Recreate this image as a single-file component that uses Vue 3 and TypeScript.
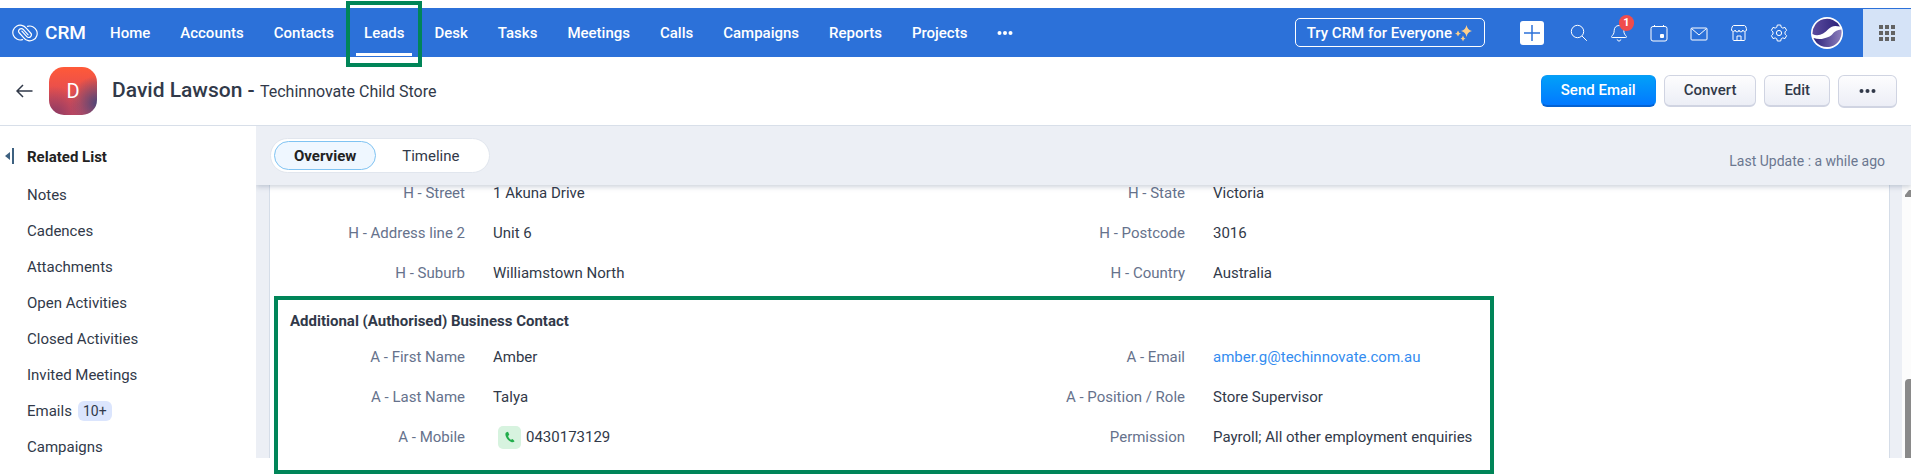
<script setup lang="ts">
import { ref } from 'vue'

interface Field {
  label: string
  value: string
  kind?: 'link' | 'phone'
}

const modules: string[] = [
  'Home', 'Accounts', 'Contacts', 'Leads', 'Desk', 'Tasks',
  'Meetings', 'Calls', 'Campaigns', 'Reports', 'Projects',
]
const activeModule = ref('Leads')

const related: { name: string; count?: string }[] = [
  { name: 'Notes' },
  { name: 'Cadences' },
  { name: 'Attachments' },
  { name: 'Open Activities' },
  { name: 'Closed Activities' },
  { name: 'Invited Meetings' },
  { name: 'Emails', count: '10+' },
  { name: 'Campaigns' },
]

const tabs: string[] = ['Overview', 'Timeline']
const activeTab = ref('Overview')

const address: Field[] = [
  { label: 'H - Street', value: '1 Akuna Drive' },
  { label: 'H - State', value: 'Victoria' },
  { label: 'H - Address line 2', value: 'Unit 6' },
  { label: 'H - Postcode', value: '3016' },
  { label: 'H - Suburb', value: 'Williamstown North' },
  { label: 'H - Country', value: 'Australia' },
]

const contact: Field[] = [
  { label: 'A - First Name', value: 'Amber' },
  { label: 'A - Email', value: 'amber.g@techinnovate.com.au', kind: 'link' },
  { label: 'A - Last Name', value: 'Talya' },
  { label: 'A - Position / Role', value: 'Store Supervisor' },
  { label: 'A - Mobile', value: '0430173129', kind: 'phone' },
  { label: 'Permission', value: 'Payroll; All other employment enquiries' },
]
</script>

<template>
  <div class="page">
    <header class="topbar">
      <a class="brand" href="#">
        <svg width="26" height="18" viewBox="0 0 26 18" fill="none" stroke="#fff" stroke-width="1.2" stroke-linecap="round">
          <path d="M10.5 15.6A7.400 7.400 0 1 1 14.2 4.2L18.6 9a2.6 2.6 0 0 1-3.8 3.6L9.9 7.2" />
          <path d="M15.5 2.4A7.400 7.400 0 1 1 11.8 13.8L7.4 9A2.6 2.6 0 0 1 11.200 5.400L16.100 10.800" />
        </svg>
        <span>CRM</span>
      </a>
      <nav class="modules">
        <a
          v-for="m in modules"
          :key="m"
          href="#"
          class="module"
          :class="{ active: m === activeModule }"
          @click.prevent="activeModule = m"
        >{{ m }}</a>
        <button class="more-modules" aria-label="More modules">
          <svg width="16" height="6" viewBox="0 0 16 6" fill="#fff">
            <circle cx="2.500" cy="3" r="2" /><circle cx="8" cy="3" r="2" /><circle cx="13.500" cy="3" r="2" />
          </svg>
        </button>
      </nav>

      <button class="try">
        Try CRM for Everyone
        <svg width="18" height="18" viewBox="0 0 18 18" fill="#ffcf8a">
          <path d="M11.500 1Q12.300 6 17 7Q12.300 8 11.500 13Q10.700 8 6 7Q10.700 6 11.500 1Z" />
          <path d="M3 6.500Q3.500 9 6 9.500Q3.500 10 3 12.500Q2.500 10 0 9.500Q2.500 9 3 6.500Z" />
          <path d="M8 11.500Q8.400 14 10.500 14.500Q8.400 15 8 17.500Q7.600 15 5.500 14.500Q7.600 14 8 11.500Z" />
        </svg>
      </button>

      <div class="tools">
        <button class="tool add" aria-label="Create">
          <svg width="24" height="24" viewBox="0 0 24 24">
            <rect width="24" height="24" rx="3" fill="#fff" />
            <path d="M12 4v16M4 12h16" stroke="#2c71d9" stroke-width="1.500" fill="none" />
          </svg>
        </button>
        <button class="tool" aria-label="Search">
          <svg width="18" height="18" viewBox="0 0 18 18"><circle cx="7.500" cy="7.500" r="6.200" /><path d="M12 12l4.800 4.800" /></svg>
        </button>
        <button class="tool" aria-label="Notifications">
          <svg width="18" height="18" viewBox="0 0 18 18">
            <path d="M9 1.500C5.800 1.500 4.200 4 4.200 6.500c0 3.500-1.400 4.300-2.500 5.800-.5.700-.2 1.200.5 1.200h13.600c.7 0 1-.5.500-1.200-1.100-1.500-2.500-2.300-2.500-5.800C13.800 4 12.200 1.500 9 1.500zM6.800 15.500L9 17.300l2.200-1.800" />
          </svg>
          <span class="badge">1</span>
        </button>
        <button class="tool" aria-label="Calendar">
          <svg width="18" height="18" viewBox="0 0 18 18">
            <rect x="1" y="2.500" width="16" height="14.500" rx="2" /><path d="M4.500 1v2M13.500 1v2" />
            <rect x="10" y="10" width="4" height="4" rx="1" fill="#fff" stroke="none" />
          </svg>
        </button>
        <button class="tool" aria-label="Mail">
          <svg width="18" height="18" viewBox="0 0 18 18"><rect x="1" y="4" width="16" height="12" rx="1" /><path d="M1.500 4.500L9 11l7.500-6.500" /></svg>
        </button>
        <button class="tool" aria-label="Marketplace">
          <svg width="18" height="18" viewBox="0 0 18 18">
            <path d="M3.500 1.500h11c1 0 2 2.500 2 4.500a1.900 1.900 0 0 1-3.700 0 1.900 1.900 0 0 1-3.800 0 1.900 1.900 0 0 1-3.800 0 1.900 1.900 0 0 1-3.700 0c0-2 1-4.500 2-4.500zM3 8v7.500c0 .6.400 1 1 1h10c.6 0 1-.4 1-1V8M7 16.500V12h4v4.500" />
          </svg>
        </button>
        <button class="tool" aria-label="Setup">
          <svg width="18" height="18" viewBox="0 0 18 18">
            <path d="M7.300 1h3.400l.5 2.200 1.600.9 2.200-.7 1.600 2.900-1.600 1.600v2.200l1.600 1.600-1.600 2.900-2.200-.7-1.600.9-.5 2.200H7.300l-.5-2.200-1.600-.9-2.200.7-1.600-2.900L3 10.100V7.900L1.400 6.300 3 3.400l2.200.7 1.600-.9z" stroke-linejoin="round" />
            <circle cx="9" cy="9" r="2.600" />
          </svg>
        </button>
      </div>
      <button class="profile" aria-label="Profile">
        <svg width="32" height="32" viewBox="0 0 32 32">
          <defs>
            <linearGradient id="orb" x1="0" y1="0" x2="1" y2="0">
              <stop offset="0" stop-color="#2b2279" /><stop offset="1" stop-color="#8d7fbd" />
            </linearGradient>
            <linearGradient id="orbTop" x1="0" y1="0" x2="1" y2="0">
              <stop offset="0" stop-color="#5b4b9e" /><stop offset="1" stop-color="#2b2279" />
            </linearGradient>
          </defs>
          <circle cx="16" cy="16" r="16" fill="#fff" />
          <path d="M1.500 17A14.600 14.600 0 0 1 29 9.500C24 8.500 21 8.500 17.500 12 13 17 7 20 1.500 17Z" fill="url(#orbTop)" />
          <path d="M2.500 21C8 23 13 22 18.500 19.500 22 18 22 13.500 30.300 12.500A14.600 14.600 0 0 1 2.500 21Z" fill="url(#orb)" />
        </svg>
      </button>
      <button class="apps" aria-label="All apps">
        <svg width="16" height="16" viewBox="0 0 16 16" fill="#636363">
          <path d="M0 0h4v4H0zM6 0h4v4H6zM12 0h4v4h-4zM0 6h4v4H0zM6 6h4v4H6zM12 6h4v4h-4zM0 12h4v4H0zM6 12h4v4H6zM12 12h4v4h-4z" />
        </svg>
      </button>
    </header>

    <section class="record">
      <button class="back" aria-label="Back">
        <svg width="17" height="14" viewBox="0 0 17 14" fill="none" stroke="#313949" stroke-width="1.500"><path d="M16.500 7H1M7 1L1 7l6 6" /></svg>
      </button>
      <div class="avatar">D</div>
      <h1>David Lawson <span class="dash">-</span> <small>Techinnovate Child Store</small></h1>
      <div class="actions">
        <button class="btn primary">Send Email</button>
        <button class="btn">Convert</button>
        <button class="btn">Edit</button>
        <button class="btn dots" aria-label="More actions">
          <svg width="17" height="6" viewBox="0 0 17 6" fill="#313949">
            <circle cx="2.500" cy="3" r="2" /><circle cx="8.500" cy="3" r="2" /><circle cx="14.500" cy="3" r="2" />
          </svg>
        </button>
      </div>
    </section>

    <div class="body">
      <aside class="sidebar">
        <button class="collapse" aria-label="Collapse list">
          <svg width="9" height="16" viewBox="0 0 9 16" fill="#3d6180"><path d="M5 4v8L0 8zM7 0h2v16H7z" /></svg>
        </button>
        <h2>Related List</h2>
        <ul>
          <li v-for="r in related" :key="r.name">
            <a href="#">{{ r.name }}</a><span v-if="r.count" class="count">{{ r.count }}</span>
          </li>
        </ul>
      </aside>

      <main class="main">
        <div class="tabbar">
          <div class="tabs" role="tablist">
            <button
              v-for="t in tabs"
              :key="t"
              role="tab"
              :aria-selected="t === activeTab"
              class="tab"
              :class="{ selected: t === activeTab }"
              @click="activeTab = t"
            >{{ t }}</button>
          </div>
          <span class="updated">Last Update : a while ago</span>
        </div>
        <div class="viewport">
          <div class="panel">
            <dl class="fields scrolled">
              <div v-for="f in address" :key="f.label" class="field">
                <dt>{{ f.label }}</dt>
                <dd>{{ f.value }}</dd>
              </div>
            </dl>
            <section class="contact">
              <h3>Additional (Authorised) Business Contact</h3>
              <dl class="fields">
                <div v-for="f in contact" :key="f.label" class="field">
                  <dt>{{ f.label }}</dt>
                  <dd>
                    <a v-if="f.kind === 'link'" :href="`mailto:${f.value}`">{{ f.value }}</a>
                    <span v-else-if="f.kind === 'phone'" class="phone">
                      <button class="call" aria-label="Call">
                        <svg width="10" height="12" viewBox="0 0 10 12"><path d="M1 1.500C.2 2.500.2 4 1 5.800 2.200 8.500 4.500 10.800 6.800 11.200 8 11.400 9 11 9.600 10.200L7.600 8 6 8.800C4.700 8.200 3.500 6.500 3.100 5L4.300 3.700 3 .8Z" fill="#21ad4b" /></svg>
                      </button>{{ f.value }}
                    </span>
                    <template v-else>{{ f.value }}</template>
                  </dd>
                </div>
              </dl>
            </section>
          </div>
          <div class="scroll" aria-hidden="true">
            <svg class="scroll-up" width="6" height="7" viewBox="0 0 6 7"><path d="M0 7V5L4 0H6V7Z" fill="#8a8a8a" /></svg>
            <div class="thumb"></div>
          </div>
        </div>
      </main>
    </div>
  </div>
</template>

<style>
body {
  margin: 0;
  background: #fff;
}
</style>

<style scoped>
.page {
  padding: 8px 0 17px;
  font-family: Roboto, "Liberation Sans", sans-serif;
  font-size: 15px;
  line-height: 20px;
  color: #313949;
  overflow-x: clip;
}
button {
  font: inherit;
  color: inherit;
  margin: 0;
  padding: 0;
  border: 0;
  background: none;
  cursor: pointer;
}
a {
  color: inherit;
  text-decoration: none;
}
svg {
  display: block;
  flex: none;
}

.topbar {
  display: flex;
  align-items: center;
  height: 49px;
  background: #2c71d9;
  color: #fff;
}
.brand {
  display: flex;
  align-items: center;
  gap: 7px;
  width: 90px;
  padding-left: 12px;
  font-size: 19px;
  font-weight: 500;
}
.modules {
  display: flex;
  align-items: center;
  gap: 14px;
  flex: 1;
}
.module {
  position: relative;
  padding: 15px 8px 14px;
  font-weight: 500;
}
.module.active::before {
  content: "";
  position: absolute;
  inset: auto 0 1px;
  height: 3px;
  background: #fff;
}
.module.active::after {
  content: "";
  position: absolute;
  inset: -7px -10px -10px;
  border: 4px solid #008558;
  pointer-events: none;
}
.more-modules {
  padding: 6px 8px;
}
.try {
  display: flex;
  align-items: center;
  gap: 3px;
  height: 29px;
  padding: 0 11px;
  border: 1px solid #fff;
  border-radius: 5px;
  font-weight: 500;
}
.tools {
  display: flex;
  align-items: center;
  gap: 22px;
  margin: 0 23px 0 35px;
}
.tool {
  position: relative;
}
.tool svg {
  fill: none;
  stroke: #fff;
  stroke-width: 1;
}
.add {
  margin-right: 4px;
}
.add svg {
  stroke: none;
}
.badge {
  position: absolute;
  top: -9px;
  right: -6px;
  width: 15px;
  height: 16px;
  border-radius: 8px;
  background: #f04c4c;
  font-size: 11px;
  line-height: 16px;
  font-weight: 700;
}
.profile {
  margin-right: 20px;
}
.apps {
  display: grid;
  place-items: center;
  align-self: stretch;
  width: 48px;
  margin-top: 1px;
  background: #d5e3f7;
}

.record {
  display: flex;
  align-items: center;
  height: 68px;
  padding: 0 14px 0 16px;
  border-bottom: 1px solid #d8dfe9;
}
.avatar {
  display: grid;
  place-items: center;
  width: 48px;
  height: 48px;
  margin: 0 15px 0 16px;
  border-radius: 15px;
  background:
    radial-gradient(circle at 100% 75%, #4f4678 0, rgba(79, 70, 120, 0) 45%),
    radial-gradient(circle at 10% 100%, #8c3a62 0, rgba(140, 58, 98, 0) 45%),
    linear-gradient(#ff5a38, #ee5148 35%, #cf4c62);
  color: #fff;
  font-size: 20px;
}
h1 {
  flex: 1;
  margin: 0;
  font-size: 21px;
  font-weight: 500;
}
h1 small {
  font-size: 16px;
  font-weight: 400;
}
.actions {
  display: flex;
  gap: 8px;
}
.btn {
  display: flex;
  align-items: center;
  justify-content: center;
  height: 32px;
  padding: 0 19px;
  border: 1px solid #d0d4e2;
  border-bottom-width: 2px;
  border-radius: 6px;
  background: linear-gradient(#fdfdfe, #eceef6);
  font-size: 15px;
  font-weight: 500;
}
.btn.primary {
  border-color: #0a9cf5 #0488fa #0462d2;
  background: linear-gradient(#02a0f8, #0279ff);
  color: #fff;
}
.btn.dots {
  height: 33px;
  padding: 0 20px;
}

.body {
  display: flex;
}
.sidebar {
  position: relative;
  flex: none;
  box-sizing: border-box;
  width: 256px;
  padding: 21px 0 0 27px;
}
.collapse {
  position: absolute;
  left: 5px;
  top: 22px;
}
h2,
h3 {
  margin: 0;
  font-size: 15px;
  line-height: 20px;
  font-weight: 700;
}
h2 {
  color: #222;
}
ul {
  display: flex;
  flex-direction: column;
  gap: 16px;
  margin: 18px 0 0;
  padding: 0;
  list-style: none;
}
li {
  display: flex;
  align-items: center;
  height: 20px;
}
.count {
  margin-left: 6px;
  padding: 0 5px;
  border-radius: 6px;
  background: #dbe5fd;
  font-size: 14px;
}

.main {
  flex: 1;
  min-width: 0;
}
.tabbar {
  position: relative;
  z-index: 1;
  display: flex;
  justify-content: space-between;
  padding: 12px 26px 12px 14px;
  background: #eceff5;
  box-shadow: 0 2px 5px rgba(60, 80, 110, 0.25);
  clip-path: inset(0 0 -8px 0);
}
.tabs {
  display: flex;
  align-items: center;
  padding: 2px 3px;
  border: 1px solid #e1e6ee;
  border-radius: 18px;
  background: #fff;
}
.tab {
  height: 29px;
  padding: 0 25px;
  border: 1px solid transparent;
  border-radius: 15px;
}
.tab.selected {
  padding: 0 19px;
  border-color: #7fc3f2;
  background: #eff7ff;
  color: #222;
  font-weight: 700;
}
.updated {
  align-self: flex-end;
  margin-bottom: 2px;
  color: #6b7790;
  font-size: 14px;
}
.viewport {
  display: flex;
  background: #eceff5;
}
.panel {
  flex: 1;
  min-width: 0;
  margin: 0 12px 0 13px;
  padding-bottom: 1px;
  border: 1px solid #d5dde8;
  border-width: 0 1px;
  background: #fff;
}
.fields {
  display: grid;
  grid-template-columns: 1fr 1fr;
  max-width: 1440px;
  margin: 0;
}
.scrolled {
  margin-top: -12px;
}
.field {
  display: grid;
  grid-template-columns: 195px 1fr;
  column-gap: 28px;
  align-items: center;
  height: 40px;
}
dt {
  color: #66728c;
  text-align: right;
}
dd {
  margin: 0;
  white-space: nowrap;
}
dd a {
  color: #338cf0;
}
.contact {
  position: relative;
}
.contact::after {
  content: "";
  position: absolute;
  inset: 3px auto -17px 4px;
  box-sizing: border-box;
  width: 1220px;
  border: 4px solid #008558;
  pointer-events: none;
}
h3 {
  padding: 18px 0 6px 20px;
}
.phone {
  display: flex;
  align-items: center;
  gap: 5px;
}
.call {
  display: grid;
  place-items: center;
  width: 23px;
  height: 23px;
  margin-left: 5px;
  border-radius: 5px;
  background: #d7f3df;
}
.scroll {
  display: flex;
  flex-direction: column;
  box-sizing: border-box;
  width: 9px;
  padding: 5px 0 0 3px;
  background: #fcfcfc;
}
.thumb {
  flex: 1;
  margin-top: 182px;
  border-radius: 4px 0 0 0;
  background: #8a8a8a;
}
</style>
